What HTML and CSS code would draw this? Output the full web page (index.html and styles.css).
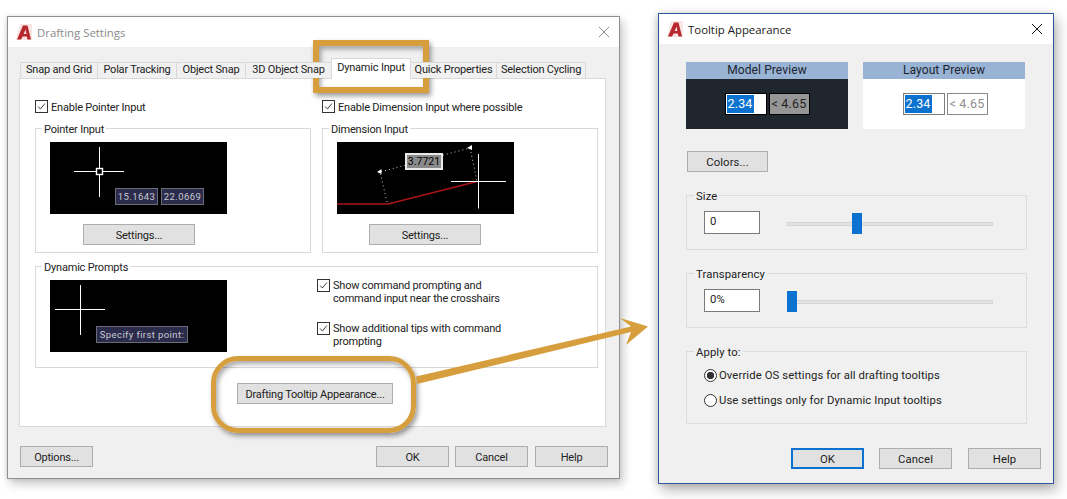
FILE: index.html
```html
<!DOCTYPE html>
<html lang="en">
<head>
<meta charset="utf-8">
<title>Drafting Settings and Tooltip Appearance</title>
<link rel="stylesheet" href="styles.css">
</head>
<body>
<section class="win win-draft">
  <header class="titlebar">
    <svg class="logo" viewBox="0 0 16 16"><path class="logo-bg" d="M4 0H16V16H0Z"/><path class="logo-a" d="M1 15.5 7 1.5H11.5L15 15.5H11.5L10.8 12.5H6.6L5 15.5ZM7.6 10H10.4L9.6 5.5Z"/></svg>
    <span class="title title-muted">Drafting Settings</span>
    <svg class="close close-muted" viewBox="0 0 12 12"><path d="M1 1 11 11M11 1 1 11"/></svg>
  </header>
  <div class="draft-body">
    <nav class="tabs">
      <span class="tab tab-1">Snap and Grid</span>
      <span class="tab tab-2">Polar Tracking</span>
      <span class="tab tab-3">Object Snap</span>
      <span class="tab tab-4">3D Object Snap</span>
      <span class="tab tab-5 tab-active">Dynamic Input</span>
      <span class="tab tab-6">Quick Properties</span>
      <span class="tab tab-7">Selection Cycling</span>
    </nav>
    <div class="panel">
      <div class="panel-grid">
        <label class="check"><span class="box"><svg viewBox="0 0 13 13"><path d="M2.5 6.5 5.2 9.5 10.5 3"/></svg></span><span class="check-text">Enable Pointer Input</span></label>
        <label class="check"><span class="box"><svg viewBox="0 0 13 13"><path d="M2.5 6.5 5.2 9.5 10.5 3"/></svg></span><span class="check-text">Enable Dimension Input where possible</span></label>
        <div class="group group-input">
          <span class="legend">Pointer Input</span>
          <div class="canvas">
            <svg class="canvas-art" viewBox="0 0 177 72">
              <path class="cross" d="M24 29.5H46M53 29.5H74M49.5 5V26M49.5 33V55"/>
              <rect class="cross-box" x="46.5" y="26.5" width="6" height="6"/>
            </svg>
            <span class="tip tip-a">15.1643</span>
            <span class="tip tip-b">22.0669</span>
          </div>
          <button class="btn btn-settings">Settings...</button>
        </div>
        <div class="group group-input">
          <span class="legend">Dimension Input</span>
          <div class="canvas">
            <svg class="canvas-art" viewBox="0 0 177 72">
              <path class="red" d="M0 62H51L140 39.5"/>
              <path class="dots" d="M50 60 43 30 133 6 140 39"/>
              <path class="marker" d="M40 30 44.500 27 44.500 32ZM130 6 135 3 135 8Z"/>
              <path class="cross" d="M114 39.5H169M141.5 12V66.5"/>
            </svg>
            <span class="dim-tip">3.7721</span>
          </div>
          <button class="btn btn-settings btn-settings-b">Settings...</button>
        </div>
        <div class="group group-prompts">
          <span class="legend">Dynamic Prompts</span>
          <div class="canvas">
            <svg class="canvas-art" viewBox="0 0 177 72">
              <path class="cross" d="M5 29.5H55M30.5 5V55"/>
            </svg>
            <span class="tip tip-c">Specify first point:</span>
          </div>
          <div class="prompt-checks">
            <label class="check check-multi"><span class="box"><svg viewBox="0 0 13 13"><path d="M2.5 6.5 5.2 9.5 10.5 3"/></svg></span><span class="check-lines">Show command prompting and<br>command input near the crosshairs</span></label>
            <label class="check check-multi"><span class="box"><svg viewBox="0 0 13 13"><path d="M2.5 6.5 5.2 9.5 10.5 3"/></svg></span><span class="check-lines">Show additional tips with command<br>prompting</span></label>
          </div>
        </div>
      </div>
      <button class="btn btn-tooltip">Drafting Tooltip Appearance...</button>
    </div>
    <footer class="draft-foot">
      <button class="btn btn-foot">Options...</button>
      <span class="foot-right">
        <button class="btn btn-foot">OK</button>
        <button class="btn btn-foot">Cancel</button>
        <button class="btn btn-foot">Help</button>
      </span>
    </footer>
  </div>
</section>

<section class="win win-tip">
  <header class="titlebar titlebar-tip">
    <svg class="logo" viewBox="0 0 16 16"><path class="logo-bg" d="M4 0H16V16H0Z"/><path class="logo-a" d="M1 15.5 7 1.5H11.5L15 15.5H11.5L10.8 12.5H6.6L5 15.5ZM7.6 10H10.4L9.6 5.5Z"/></svg>
    <span class="title">Tooltip Appearance</span>
    <svg class="close" viewBox="0 0 12 12"><path d="M1 1 11 11M11 1 1 11"/></svg>
  </header>
  <div class="tip-body">
    <div class="previews">
      <div class="preview preview-dark">
        <div class="preview-head">Model Preview</div>
        <div class="preview-main">
          <span class="pv-input"><span class="pv-sel">2.34</span></span>
          <span class="pv-angle">&lt; 4.65</span>
        </div>
      </div>
      <div class="preview preview-light">
        <div class="preview-head">Layout Preview</div>
        <div class="preview-main">
          <span class="pv-input"><span class="pv-sel">2.34</span></span>
          <span class="pv-angle">&lt; 4.65</span>
        </div>
      </div>
    </div>
    <button class="btn btn-colors">Colors...</button>
    <div class="opt-group opt-slider">
      <span class="legend legend-tip">Size</span>
      <span class="field">0</span>
      <span class="slider"><span class="thumb thumb-mid"></span></span>
    </div>
    <div class="opt-group opt-slider">
      <span class="legend legend-tip">Transparency</span>
      <span class="field">0%</span>
      <span class="slider"><span class="thumb"></span></span>
    </div>
    <div class="opt-group opt-apply">
      <span class="legend legend-tip">Apply to:</span>
      <label class="radio"><span class="dot dot-on"></span>Override OS settings for all drafting tooltips</label>
      <label class="radio"><span class="dot"></span>Use settings only for Dynamic Input tooltips</label>
    </div>
    <footer class="tip-foot">
      <button class="btn btn-foot btn-default">OK</button>
      <button class="btn btn-foot">Cancel</button>
      <button class="btn btn-foot btn-help">Help</button>
    </footer>
  </div>
</section>

<div class="hl hl-tab"></div>
<div class="hl hl-button"></div>
<svg class="arrow" viewBox="0 0 1067 499"><path d="M416 376.5 631 326.5 620 318 648 326.5 626 345 631 332 417 384Z"/></svg>
</body>
</html>
```
FILE: styles.css
```css
* { box-sizing: border-box; }
html, body { margin: 0; height: 100%; overflow: hidden; }
body {
  position: relative;
  width: 1067px;
  height: 499px;
  background: #fff;
  font: 11px Roboto, "Noto Sans", sans-serif;
  color: #222;
}
.win {
  position: absolute;
  display: flex;
  flex-direction: column;
  background: #f0f0f0;
}
.win-draft {
  left: 7px; top: 16px; width: 613px; height: 463px;
  border: 1px solid #8f8f8f;
  box-shadow: 3px 5px 9px rgba(0,0,0,.22), -1px 0 4px rgba(0,0,0,.1);
  letter-spacing: -.2px;
}
.win-tip {
  left: 658px; top: 13px; width: 396px; height: 471px;
  border: 1px solid #2c57a0;
  box-shadow: 3px 6px 12px rgba(0,0,0,.3), -2px 0 6px rgba(0,0,0,.12);
  font-size: 11.3px;
  letter-spacing: .1px;
}
.titlebar {
  display: flex;
  align-items: center;
  height: 30px;
  flex: none;
  padding-left: 8px;
  padding-right: 9px;
  background: #fff;
}
.titlebar-tip { padding-right: 10px; }
.logo { width: 16px; height: 16px; flex: none; }
.logo-bg { fill: #f8e4e2; }
.logo-a { fill: #b8272d; fill-rule: evenodd; }
.title { margin-left: 5px; flex: 1; color: #1a1a1a; font-family: "Open Sans", sans-serif; font-size: 11.4px; letter-spacing: 0; }
.title-muted { color: #8a8a8a; }
.close { width: 12px; height: 12px; fill: none; stroke: #111; stroke-width: 1; }
.close-muted { stroke: #8a8a8a; }

.draft-body { flex: 1; display: flex; flex-direction: column; padding: 15px 12px 0 11px; }
.tabs { display: flex; height: 16px; margin-left: 2px; position: relative; z-index: 1; }
.tab {
  display: flex; align-items: center; justify-content: center;
  height: 16px;
  padding-bottom: 2px;
  background: #f0f0f0;
  border: 1px solid #d9d9d9;
  border-bottom: 0;
  margin-left: -1px;
  white-space: nowrap;
}
.tab-1 { width: 78px; }
.tab-2 { width: 80px; }
.tab-3 { width: 70px; }
.tab-4 { width: 87px; }
.tab-5 { width: 80px; }
.tab-6 { width: 87px; }
.tab-7 { width: 90px; }
.tab-active { height: 21px; margin-top: -4px; background: #fff; z-index: 2; padding-bottom: 4px; }
.panel {
  width: 587px; height: 349px;
  background: #fff;
  border: 1px solid #d9d9d9;
  padding: 21px 8px 0 15px;
}
.panel-grid {
  display: grid;
  grid-template-columns: 276px 276px;
  column-gap: 11px;
  grid-template-rows: 13px 125px 100px;
  row-gap: 15px;
}
.check { display: flex; align-items: center; gap: 3px; line-height: 13px; white-space: nowrap; }
.check-text { padding-top: 2px; }
.check-lines { padding-top: 1px; }
.box { width: 13px; height: 13px; flex: none; display: block; border: 1px solid #333; background: #fff; }
.box svg { display: block; width: 11px; height: 11px; fill: none; stroke: #333; stroke-width: 1.1; }
.group { position: relative; border: 1px solid #d9d9d9; padding: 13px 0 0 14px; }
.group-prompts { grid-column: 1 / 3; display: flex; margin-top: -2px; }
.legend {
  position: absolute; left: 6px; top: -6px;
  padding: 0 2px; background: #fff; line-height: 13px;
}
.canvas { position: relative; width: 177px; height: 72px; background: #000; flex: none; }
.canvas-art { display: block; width: 177px; height: 72px; }
.cross { fill: none; stroke: #fff; stroke-width: 1; }
.cross-box { fill: #000; stroke: #fff; stroke-width: 1.4; }
.red { fill: none; stroke: #b01418; stroke-width: 1.4; }
.dots { fill: none; stroke: #c8c8c8; stroke-width: 1; stroke-dasharray: 1 3; }
.marker { fill: #fff; }
.tip {
  position: absolute; top: 46px; height: 17px;
  display: flex; align-items: center; justify-content: center;
  background: #2b2b4c;
  border: 1px solid #6b6b78;
  color: #c9c9d2;
  font-size: 9.5px;
  letter-spacing: .4px;
  white-space: nowrap;
}
.tip-a { left: 65px; width: 43px; }
.tip-b { left: 111px; width: 43px; }
.tip-c { left: 46px; width: 92px; }
.dim-tip {
  position: absolute; left: 68px; top: 11px; width: 38px; height: 17px;
  display: flex; align-items: center; justify-content: center;
  background: #8a8a8a;
  border: 2px solid #e8e8e8;
  color: #000;
  font-size: 10.5px;
  letter-spacing: 0;
}
.btn {
  display: block;
  height: 21px;
  padding: 1px 0 0;
  background: #e1e1e1;
  border: 1px solid #adadad;
  border-radius: 0;
  font: inherit;
  letter-spacing: inherit;
  color: #222;
  white-space: nowrap;
}
.btn-settings { width: 112px; margin: 10px 0 0 33px; }
.btn-settings-b { margin-left: 32px; }
.prompt-checks { display: flex; flex-direction: column; gap: 16px; margin-left: 90px; margin-top: -2px; }
.check-multi { align-items: flex-start; }
.check-multi .box { margin-top: 1px; }
.btn-tooltip { width: 156px; margin: 15px 0 0 202px; }
.draft-foot { display: flex; justify-content: space-between; padding: 19px 0 0 1px; margin-right: -1px; }
.foot-right { display: flex; gap: 6px; }
.foot-right .btn:last-child { margin-left: 1px; }
.btn-foot { width: 73px; }

.tip-body { flex: 1; display: flex; flex-direction: column; padding: 18px 0 0 27px; }
.previews { display: flex; gap: 15px; }
.preview { width: 162px; height: 67px; }
.preview-head { height: 17px; background: #98b3d3; text-align: center; font-size: 12px; line-height: 16px; color: #1c2430; }
.preview-main { height: 50px; display: flex; justify-content: center; gap: 2px; padding-top: 14px; font-size: 12.5px; letter-spacing: .2px; }
.preview-dark .preview-main { background: #20262e; }
.preview-light .preview-main { background: #fff; padding-left: 2px; }
.pv-input { width: 42px; height: 22px; padding: 1px; background: #fff; border: 1px solid #000; }
.pv-sel { display: block; width: 27px; height: 18px; background: #0b72cf; color: #fff; text-align: center; line-height: 18px; }
.pv-angle { width: 41px; height: 22px; background: #969696; border: 1px solid #000; color: #222; text-align: center; line-height: 20px; }
.preview-light .pv-input { border-color: #7f7f7f; }
.preview-light .pv-angle { background: #fff; border-color: #8a8a8a; color: #8f8f8f; }
.btn-colors { width: 81px; margin: 22px 0 0 1px; flex: none; }
.opt-group { position: relative; width: 341px; border: 1px solid #dcdcdc; }
.legend-tip { background: #f0f0f0; top: -6px; left: 7px; }
.opt-slider { height: 55px; display: flex; align-items: flex-start; padding: 15px 0 0 17px; margin-top: 23px; }
.btn-colors + .opt-slider { margin-top: 23px; }
.field { width: 56px; height: 23px; flex: none; background: #fff; border: 1px solid #7a7a7a; padding: 2px 5px; line-height: 15px; }
.slider { position: relative; width: 206px; height: 4px; margin: 11px 0 0 27px; background: #e3e3e3; border: 1px solid #d5d5d5; }
.thumb { position: absolute; left: -1px; top: -10px; width: 10px; height: 21px; background: #0b72cf; }
.thumb-mid { left: 64px; }
.opt-apply { height: 73px; margin-top: 23px; padding: 16px 0 0 17px; display: flex; flex-direction: column; gap: 10px; }
.radio { display: flex; align-items: center; gap: 2px; height: 15px; white-space: nowrap; }
.dot { width: 13px; height: 13px; flex: none; border: 1px solid #333; border-radius: 50%; background: #fff; display: block; }
.dot-on { background: radial-gradient(circle, #333 0 3.4px, #fff 4px); }
.tip-foot { display: flex; gap: 15px; margin: 24px 0 0 105px; }
.btn-default { border: 2px solid #0b72cf; }
.btn-help { margin-left: 1px; }

.hl { position: absolute; border: 6px solid #d69e3c; box-shadow: 2px 3px 5px rgba(0,0,0,.4), inset 2px 3px 5px rgba(0,0,0,.35); }
.hl-tab { left: 313px; top: 40px; width: 116px; height: 53px; }
.hl-button { left: 211px; top: 356px; width: 205px; height: 77px; border-width: 5px; border-radius: 27px; }
.arrow { position: absolute; left: 0; top: 0; width: 1067px; height: 499px; pointer-events: none; }
.arrow path { fill: #d69e3c; }
```
